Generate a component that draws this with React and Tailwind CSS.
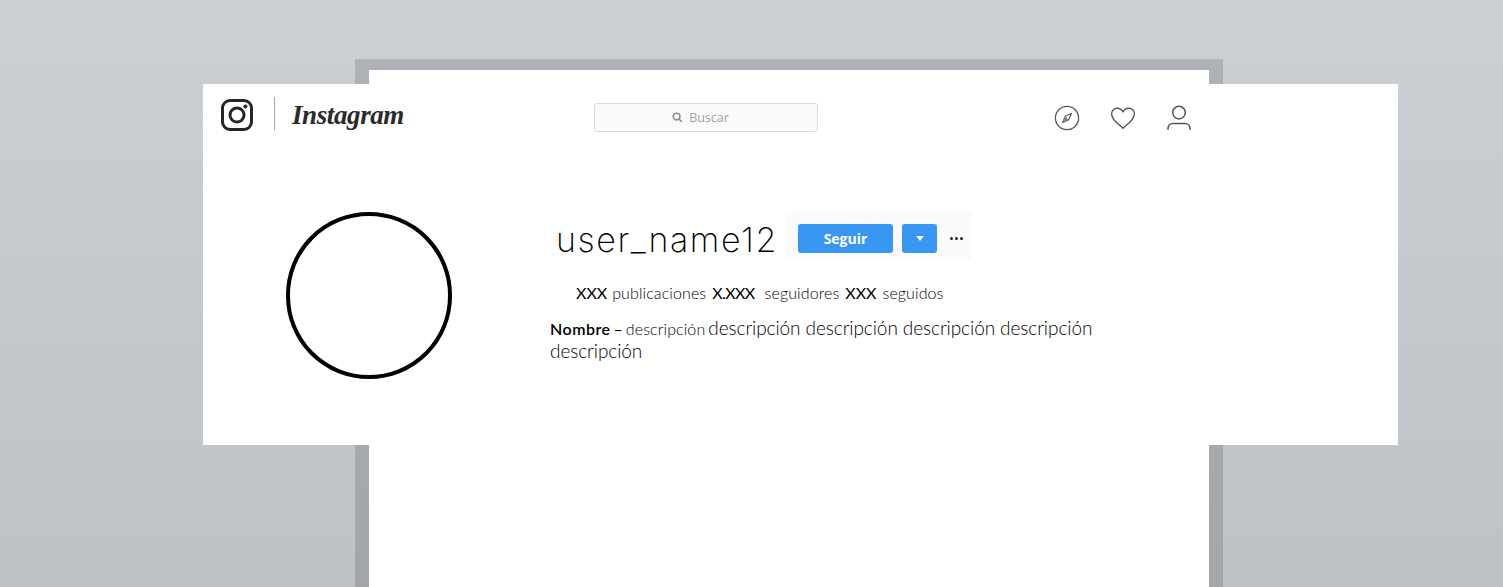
export default function App() {
  return (
    <div className="relative h-[587px] w-[1503px] overflow-hidden bg-gradient-to-b from-[#ccd0d5] to-[#bec1c5] pt-[59px] pl-[355px]">
      <div className="h-[528px] w-[868px] bg-gradient-to-b from-[#aeb1b5] to-[#a3a6a9] px-[14px] pt-[11px]">
        <div className="h-full w-[840px] bg-white" />
      </div>

      <div className="absolute left-[203px] top-[84px] h-[361px] w-[1195px] bg-white font-['Lato',sans-serif]">
        <header className="flex h-[60px] items-start text-[#262626]">
          <div className="ml-[17px] mt-[14px] flex h-[34px] w-[34px] items-center justify-center">
            <svg width="34" height="34" viewBox="0 0 34 34" fill="none" stroke="#262626">
              <rect x="2.500" y="2.500" width="29" height="29" rx="7.500" strokeWidth="3" />
              <circle cx="17" cy="17" r="7" strokeWidth="3" />
              <circle cx="25.400" cy="8.600" r="2" fill="#262626" stroke="none" />
            </svg>
          </div>
          <div className="ml-[20px] mt-[13px] h-[33px] w-px bg-[#a8a8a8]" />
          <div className="ml-[17px] mt-[11px] w-[111px] font-['Liberation_Serif',serif] text-[27px] leading-[40px] font-bold tracking-[-0.4px] whitespace-nowrap text-[#2a2a2a] italic">
            Instagram
          </div>
          <div className="ml-[191px] mt-[19px] flex h-[29px] w-[224px] items-center justify-center gap-[6px] rounded-[3px] border border-[#dbdbdb] bg-[#fafafa] pr-[11px]">
            <svg width="11" height="11" viewBox="0 0 11 11" fill="none" stroke="#8e8e8e" strokeWidth="1.6">
              <circle cx="4.600" cy="4.600" r="3.300" />
              <path d="M7 7l3 3" />
            </svg>
            <span className="pt-[2px] font-['Open_Sans',sans-serif] text-[12.5px] text-[#a0a0a0]">Buscar</span>
          </div>
          <div className="ml-[236px] mt-[20px] flex items-center gap-[30px]">
            <svg width="26" height="28" viewBox="0 0 26 28" fill="none" stroke="#555" strokeWidth="1.3">
              <circle cx="13" cy="14" r="11.600" />
              <path d="M17.500 9.500l-6 2.400-3 6.600 6-2.400z" strokeLinejoin="round" strokeWidth="1.100" />
              <path d="M11.500 11.900l3 4.200-6 2.400z" fill="#888" stroke="none" />
            </svg>
            <svg width="26" height="28" viewBox="0 0 26 28" fill="none" stroke="#555" strokeWidth="1.400">
              <path d="M13 24.200C9 20.600 1.600 16 1.600 9.900c0-3.400 2.600-5.700 5.600-5.700 2.400 0 4.500 1.200 5.800 3.600 1.300-2.400 3.400-3.600 5.800-3.600 3 0 5.600 2.300 5.600 5.700 0 6.100-7.400 10.700-11.400 14.300z" strokeLinejoin="round" />
            </svg>
            <svg width="26" height="28" viewBox="0 0 26 28" fill="none" stroke="#555" strokeWidth="1.500">
              <circle cx="13" cy="8.600" r="6.300" />
              <path d="M2 26v-1.500c0-3 2.200-5 5-5h12c2.800 0 5 2 5 5V26" />
            </svg>
          </div>
        </header>

        <div className="flex pt-[68px]">
          <div className="ml-[83px] h-[167px] w-[166px] shrink-0 rounded-full border-4 border-black" />
          <div className="ml-[98px] w-[560px] font-light">
            <div className="flex h-[47px] items-start">
              <h1 className="ml-[6px] mt-[9px] w-[229px] font-['Inter',sans-serif] text-[34px] leading-[38px] font-extralight tracking-[1.6px] whitespace-nowrap text-black">
                user_name12
              </h1>
              <div className="flex h-[47px] w-[186px] items-start bg-[#fafafa] pl-[13px] pt-[12px]">
                <button className="h-[29px] w-[95px] rounded-[3px] bg-[#3897f0] font-['Open_Sans',sans-serif] text-[14px] font-bold text-white">
                  Seguir
                </button>
                <button className="ml-[9px] flex h-[29px] w-[35px] items-center justify-center rounded-[3px] bg-[#3897f0]">
                  <svg width="8" height="5" viewBox="0 0 8 5"><path d="M0 0h8L4 5z" fill="#fff" /></svg>
                </button>
                <div className="ml-[13px] mt-[13px] flex gap-[2px]">
                  <span className="h-[3px] w-[3px] rounded-full bg-[#262626]" />
                  <span className="h-[3px] w-[3px] rounded-full bg-[#262626]" />
                  <span className="h-[3px] w-[3px] rounded-full bg-[#262626]" />
                </div>
              </div>
            </div>
            <div className="mt-[24px] flex h-[20px] items-center pl-[26px] text-[16px] whitespace-nowrap text-black">
              <span className="font-normal">XXX</span>
              <span className="ml-[5px] tracking-[0.1px]">publicaciones</span>
              <span className="ml-[6px] font-normal tracking-[-0.6px]">X.XXX</span>
              <span className="ml-[10px] tracking-[0.1px]">seguidores</span>
              <span className="ml-[6px] font-normal">XXX</span>
              <span className="ml-[6px] tracking-[0.1px]">seguidos</span>
            </div>
            <div className="mt-[14px] text-[19px] leading-[22px] tracking-[-0.08px] text-black">
              <div className="flex items-baseline whitespace-nowrap">
                <span className="text-[16px] font-semibold tracking-[0.5px]">Nombre</span>
                <span className="ml-[3px] text-[16px] font-normal">–</span>
                <span className="ml-[3px] text-[16px] tracking-[0.1px]">descripción</span>
                <span className="ml-[3px]">descripción descripción descripción descripción</span>
              </div>
              <div>descripción</div>
            </div>
          </div>
        </div>
      </div>
    </div>
  );
}
